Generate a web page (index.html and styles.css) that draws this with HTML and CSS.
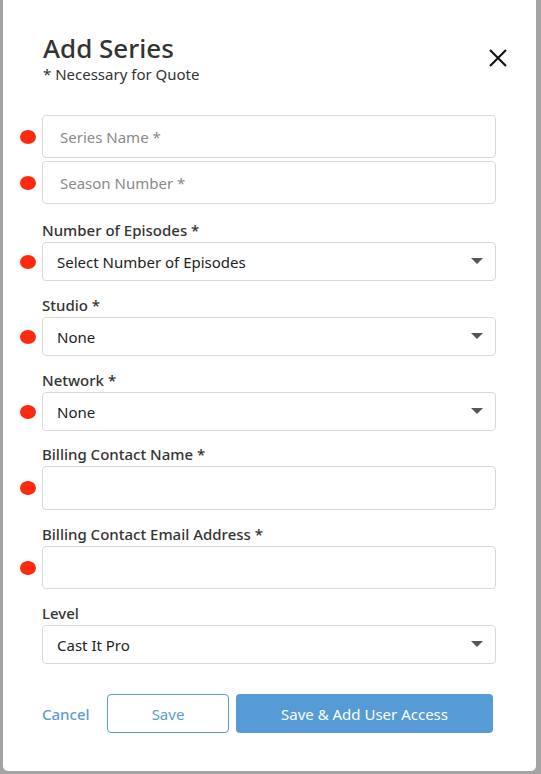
FILE: index.html
```html
<!DOCTYPE html>
<html lang="en">
<head>
    <meta charset="UTF-8">
    <meta name="viewport" content="width=device-width, initial-scale=1.0">
    <title>Add Series</title>
    <link rel="stylesheet" href="styles.css">
</head>
<body>
<div class="modal">
    <div class="modal-header">
        <div>
            <h1 class="modal-title">Add Series</h1>
            <p class="modal-note">* Necessary for Quote</p>
        </div>
        <button class="close-button" type="button" aria-label="Close">
            <svg width="18" height="18" viewBox="0 0 18 18">
                <path d="M1 1 L17 17 M17 1 L1 17" stroke="#111" stroke-width="2.1" fill="none"/>
            </svg>
        </button>
    </div>

    <form class="series-form">
        <div class="control required">
            <input class="text-input" type="text" placeholder="Series Name *">
        </div>
        <div class="control required tight">
            <input class="text-input" type="text" placeholder="Season Number *">
        </div>

        <div class="field first">
            <label class="field-label">Number of Episodes *</label>
            <div class="control required">
                <select class="select-input">
                    <option>Select Number of Episodes</option>
                </select>
                <svg class="select-arrow" width="12" height="6" viewBox="0 0 12 6"><path d="M0 0 H12 L6 6 Z" fill="#555"/></svg>
            </div>
        </div>

        <div class="field">
            <label class="field-label">Studio *</label>
            <div class="control required">
                <select class="select-input">
                    <option>None</option>
                </select>
                <svg class="select-arrow" width="12" height="6" viewBox="0 0 12 6"><path d="M0 0 H12 L6 6 Z" fill="#555"/></svg>
            </div>
        </div>

        <div class="field">
            <label class="field-label">Network *</label>
            <div class="control required">
                <select class="select-input">
                    <option>None</option>
                </select>
                <svg class="select-arrow" width="12" height="6" viewBox="0 0 12 6"><path d="M0 0 H12 L6 6 Z" fill="#555"/></svg>
            </div>
        </div>

        <div class="field after-select">
            <label class="field-label">Billing Contact Name *</label>
            <div class="control required">
                <input class="text-input tall" type="text">
            </div>
        </div>

        <div class="field">
            <label class="field-label">Billing Contact Email Address *</label>
            <div class="control required">
                <input class="text-input" type="email">
            </div>
        </div>

        <div class="field">
            <label class="field-label">Level</label>
            <div class="control">
                <select class="select-input">
                    <option>Cast It Pro</option>
                </select>
                <svg class="select-arrow" width="12" height="6" viewBox="0 0 12 6"><path d="M0 0 H12 L6 6 Z" fill="#555"/></svg>
            </div>
        </div>
    </form>

    <div class="modal-actions">
        <a href="#" class="cancel-link">Cancel</a>
        <button class="btn btn-outline" type="button">Save</button>
        <button class="btn btn-primary" type="button">Save &amp; Add User Access</button>
    </div>
</div>
</body>
</html>
```

FILE: styles.css
```css
body {
    margin: 0;
    background-color: #a4a4a4;
    font-family: "Noto Sans", Arial, sans-serif;
    color: #333;
}
.modal {
    margin-left: 3px;
    width: 533px;
    box-sizing: border-box;
    padding: 32px 40px 38px 39px;
    background-color: #fff;
    border-radius: 0 0 5px 5px;
}
.modal-header {
    display: flex;
    justify-content: space-between;
    align-items: center;
    margin-right: -11px;
}
.modal-title {
    margin: 0 0 0 1px;
    font-size: 26px;
    line-height: 32px;
    font-weight: 500;
    color: #333;
}
.modal-note {
    margin: 0 0 0 1px;
    font-size: 15px;
    line-height: 20px;
    color: #333;
}
.close-button {
    display: flex;
    padding: 0;
    border: none;
    background: none;
    cursor: pointer;
}
.series-form {
    margin-top: 31px;
}
.control {
    position: relative;
}
.control.tight {
    margin-top: 3px;
}
.required::before {
    content: "";
    position: absolute;
    left: -22px;
    top: 50%;
    width: 16px;
    height: 14px;
    margin-top: -7px;
    border-radius: 50%;
    background-color: #fb2a10;
}
.field {
    margin-top: 16px;
}
.field.first {
    margin-top: 18px;
}
.field.after-select {
    margin-top: 15px;
}
.field-label {
    display: block;
    margin-bottom: 4px;
    font-size: 15px;
    line-height: 16px;
    font-weight: 500;
    color: #333;
}
.text-input, .select-input {
    display: block;
    width: 100%;
    box-sizing: border-box;
    margin: 0;
    border: 1px solid #d9d9d9;
    border-radius: 4px;
    background-color: #fff;
    font-family: inherit;
    font-size: 15px;
    color: #222;
    outline: none;
}
.text-input {
    height: 43px;
    padding: 0 17px;
}
.text-input.tall {
    height: 44px;
}
.text-input::placeholder {
    color: #8a8a8a;
}
.select-input {
    height: 39px;
    padding: 0 36px 0 14px;
    appearance: none;
    -webkit-appearance: none;
}
.select-arrow {
    position: absolute;
    right: 13px;
    top: 16px;
    pointer-events: none;
}
.modal-actions {
    display: flex;
    align-items: center;
    margin-top: 30px;
}
.cancel-link {
    width: 65px;
    font-size: 15px;
    font-weight: 500;
    color: #5b9bd5;
    text-decoration: none;
}
.btn {
    height: 39px;
    border-radius: 4px;
    font-family: inherit;
    font-size: 15px;
    cursor: pointer;
}
.btn-outline {
    width: 122px;
    margin-right: 7px;
    border: 1px solid #5b9bd5;
    background-color: #fff;
    color: #5b9bd5;
}
.btn-primary {
    width: 257px;
    border: none;
    background-color: #569bd6;
    color: #fff;
}
```
